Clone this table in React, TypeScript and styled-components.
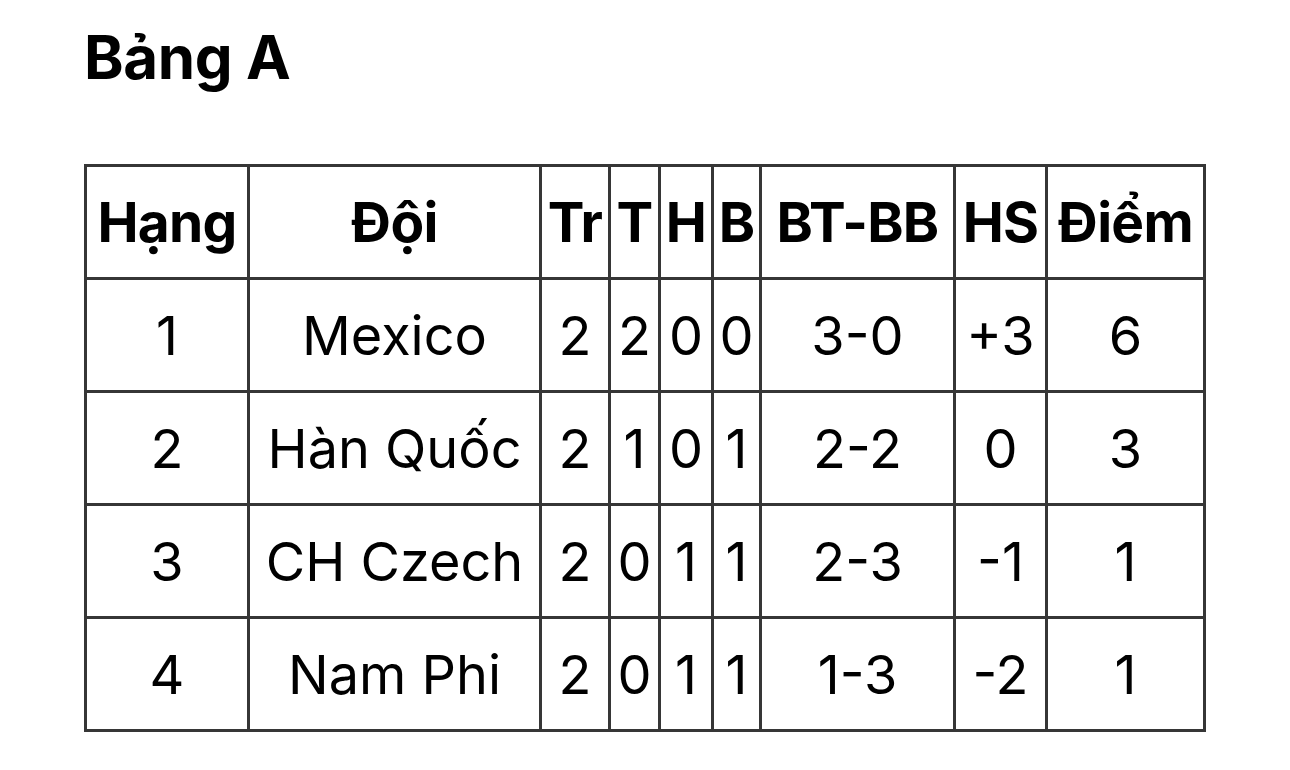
import React from 'react';
import styled, { createGlobalStyle } from 'styled-components';

const GlobalStyle = createGlobalStyle`
  html, body {
    margin: 0;
    padding: 0;
    background: #fff;
  }
  body {
    font-family: Inter, "Noto Sans", "Liberation Sans", sans-serif;
    color: #000;
  }
`;

const Page = styled.div`
  padding: 22px 0 0 84px;
`;

const Title = styled.h1`
  margin: 0 0 71px 0;
  font-size: 60px;
  line-height: 71px;
  font-weight: 700;
  letter-spacing: -0.4px;
`;

const Table = styled.table`
  border-collapse: collapse;
  table-layout: fixed;
  width: 1121px;
`;

const HeadCell = styled.th`
  border: 3px solid #363636;
  height: 110px;
  padding: 0;
  font-size: 55px;
  font-weight: 700;
  text-align: center;
  vertical-align: middle;
  white-space: nowrap;
  letter-spacing: -0.7px;
`;

const Cell = styled.td`
  border: 3px solid #363636;
  height: 110px;
  padding: 0;
  font-size: 54px;
  font-weight: 400;
  text-align: center;
  vertical-align: middle;
  white-space: nowrap;
`;

type Row = {
  rank: number;
  team: string;
  played: number;
  win: number;
  draw: number;
  loss: number;
  goals: string;
  diff: string;
  points: number;
};

const columns = [
  { label: 'Hạng', width: 163 },
  { label: 'Đội', width: 292 },
  { label: 'Tr', width: 69 },
  { label: 'T', width: 50 },
  { label: 'H', width: 53 },
  { label: 'B', width: 48 },
  { label: 'BT-BB', width: 194 },
  { label: 'HS', width: 92 },
  { label: 'Điểm', width: 158 },
];

const rows: Row[] = [
  { rank: 1, team: 'Mexico', played: 2, win: 2, draw: 0, loss: 0, goals: '3-0', diff: '+3', points: 6 },
  { rank: 2, team: 'Hàn Quốc', played: 2, win: 1, draw: 0, loss: 1, goals: '2-2', diff: '0', points: 3 },
  { rank: 3, team: 'CH Czech', played: 2, win: 0, draw: 1, loss: 1, goals: '2-3', diff: '-1', points: 1 },
  { rank: 4, team: 'Nam Phi', played: 2, win: 0, draw: 1, loss: 1, goals: '1-3', diff: '-2', points: 1 },
];

const App: React.FC = () => {
  return (
    <>
      <GlobalStyle />
      <Page>
        <Title>Bảng A</Title>
        <Table>
          <colgroup>
            {columns.map(c => (
              <col key={c.label} style={{ width: c.width }} />
            ))}
          </colgroup>
          <thead>
            <tr>
              {columns.map(c => (
                <HeadCell key={c.label}>{c.label}</HeadCell>
              ))}
            </tr>
          </thead>
          <tbody>
            {rows.map(r => (
              <tr key={r.rank}>
                <Cell>{r.rank}</Cell>
                <Cell>{r.team}</Cell>
                <Cell>{r.played}</Cell>
                <Cell>{r.win}</Cell>
                <Cell>{r.draw}</Cell>
                <Cell>{r.loss}</Cell>
                <Cell>{r.goals}</Cell>
                <Cell>{r.diff}</Cell>
                <Cell>{r.points}</Cell>
              </tr>
            ))}
          </tbody>
        </Table>
      </Page>
    </>
  );
};

export default App;
